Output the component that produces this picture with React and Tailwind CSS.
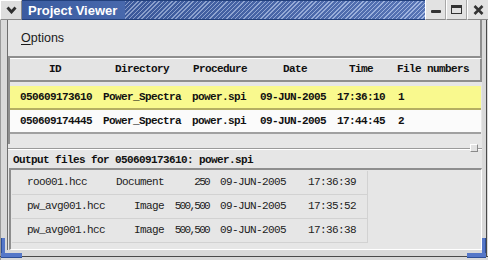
import React from "react";

const projects = [
  { id: "050609173610", dir: "Power_Spectra", proc: "power.spi", date: "09-JUN-2005", time: "17:36:10", n: "1", sel: true },
  { id: "050609174445", dir: "Power_Spectra", proc: "power.spi", date: "09-JUN-2005", time: "17:44:45", n: "2" },
];

const files = [
  ["roo001.hcc", "Document", "250", "09-JUN-2005", "17:36:39"],
  ["pw_avg001.hcc", "Image", "500,500", "09-JUN-2005", "17:35:52"],
  ["pw_avg001.hcc", "Image", "500,500", "09-JUN-2005", "17:36:38"],
];

const mono = "font-['Liberation_Mono',monospace] text-[11px] tracking-[-0.6px]";

const TitleButton = ({ children, last }) => (
  <div className={"w-[21px] h-full flex items-center justify-center bg-[#e2e2e2] border-l border-l-white border-b border-b-[#8a8a8a] " + (last ? "" : "border-r border-r-[#a8a8a8]")}>
    {children}
  </div>
);

const App = () => {
  return (
    <div className="w-[488px] h-[260px] flex flex-col bg-[#d9d9d9] relative overflow-hidden font-['Liberation_Sans',Arial,sans-serif]">
      {/* title bar */}
      <div className="h-[20px] flex shrink-0">
        <div className="w-[22px] h-full flex items-center justify-center bg-[#dedede] border-t border-l border-white border-r border-r-[#8a8a8a] border-b border-b-[#8a8a8a]">
          <svg width="11" height="8" viewBox="0 0 11 8">
            <path d="M1.5 1.5 L5.5 6 L9.5 1.5" stroke="#2f2f2f" strokeWidth="2.8" fill="none" />
          </svg>
        </div>
        <div className="flex-1 flex items-center bg-gradient-to-r from-[#3b5ca0] to-[#6d8dd0] border-t border-b border-[#22407c]">
          <span className="pl-[6px] pr-[8px] text-white font-bold text-[13px] leading-none">Project Viewer</span>
          <div className="flex-1 h-full bg-[repeating-linear-gradient(135deg,rgba(255,255,255,0.35)_0px,rgba(255,255,255,0.35)_1px,rgba(20,40,100,0.25)_1px,rgba(20,40,100,0.25)_3px)]" />
        </div>
        <div className="flex h-full">
          <TitleButton>
            <div className="w-[10px] h-[3px] mt-[4px] bg-[#333] rounded-[1px]" />
          </TitleButton>
          <TitleButton>
            <div className="w-[11px] h-[9px] border-[1.5px] border-t-[3px] border-[#333]" />
          </TitleButton>
          <TitleButton last>
            <svg width="11" height="10" viewBox="0 0 11 10">
              <path d="M1.5 1 L9.5 9 M9.5 1 L1.5 9" stroke="#333" strokeWidth="2.6" />
            </svg>
          </TitleButton>
        </div>
      </div>

      {/* window body */}
      <div className="flex-1 flex pl-[6px] pr-[7px] pb-[10px] border-l border-[#9a9a9a]">
        <div className="flex-1 flex flex-col bg-[#e6e6e6] border-l border-[#6e6e6e]">
          {/* menubar */}
          <div className="h-[38px] shrink-0 flex items-center pl-[13px] border-b-2 border-[#8e8e8e] border-r-2 border-r-[#8e8e8e]">
            <span className="text-[12.5px] text-[#1a1a1a]">
              <span className="underline underline-offset-2">O</span>ptions
            </span>
          </div>

          {/* top table */}
          <div className={"h-[86px] shrink-0 flex flex-col border-l-2 border-[#8e8e8e] " + mono}>
            <div className="h-[24px] flex items-center font-bold text-[#111] border-t border-white border-b-2 border-b-[#8e8e8e] border-r-2 border-r-[#8e8e8e] bg-[#e4e4e4]">
              <div className="w-[89px] pl-[39px]">ID</div>
              <div className="w-[90px] pl-[16px]">Directory</div>
              <div className="w-[67px] pl-[4px]">Procedure</div>
              <div className="w-[77px] pl-[27px]">Date</div>
              <div className="w-[60px] pl-[16px]">Time</div>
              <div className="w-[87px] pl-[4px]">File numbers</div>
            </div>
            <div className="h-[4px]" />
            {projects.map((p) => (
              <div
                key={p.id}
                className={
                  "h-[24px] flex items-center font-bold text-[#111] mr-[1px] border-b-2 " +
                  (p.sel ? "bg-[#f9f98e] border-[#b5ae62]" : "bg-[#fbfbfb] border-[#a0a0a0]")
                }
              >
                <div className="w-[87px] pl-[10px]">{p.id}</div>
                <div className="w-[90px] pl-[6px]">{p.dir}</div>
                <div className="w-[67px] pl-[5px]">{p.proc}</div>
                <div className="w-[77px] pl-[6px]">{p.date}</div>
                <div className="w-[60px] pl-[6px]">{p.time}</div>
                <div className="w-[87px] pl-[7px]">{p.n}</div>
              </div>
            ))}
            <div className="flex-1" />
          </div>

          {/* splitter */}
          <div className="h-[9px] shrink-0 relative flex items-center">
            <div className="w-full border-t border-[#9a9a9a] border-b border-b-white" />
            <div className="absolute right-[4px] top-[0px] w-[8px] h-[8px] bg-[#e2e2e2] border border-[#8a8a8a] border-t-white border-l-white" />
          </div>

          {/* output label */}
          <div className={"h-[15px] shrink-0 flex items-center pl-[5px] font-bold text-[#111] " + mono}>
            Output files for 050609173610: power.spi
          </div>

          {/* output table */}
          <div className="flex-1 flex flex-col ml-[1px] border-t-2 border-l-2 border-[#8e8e8e] border-r border-r-white border-b border-b-white pt-[1px] pl-[1px]">
            <div className={"w-[356px] flex flex-col text-[#222] " + mono}>
              {files.map((f, i) => (
                <div key={i} className="h-[24px] flex items-center border-b border-[#d2d2d2] border-r border-r-[#d2d2d2]">
                  <div className="w-[95px] pl-[15px] shrink-0">{f[0]}</div>
                  <div className="w-[63px] text-right pr-[6px] shrink-0">{f[1]}</div>
                  <div className="w-[44px] text-right pr-[5px] shrink-0 tracking-[-1.7px] whitespace-nowrap">{f[2]}</div>
                  <div className="w-[88px] pl-[6px] shrink-0">{f[3]}</div>
                  <div className="w-[66px] pl-[6px] shrink-0">{f[4]}</div>
                </div>
              ))}
            </div>
          </div>
        </div>
      </div>
      <div className="absolute left-0 right-0 bottom-[3px] h-[1px] bg-[#4a4a4a]" />
      <div className="absolute top-[20px] bottom-[3px] right-[1px] w-[1px] bg-[#4a4a4a]" />

      {/* resize corners */}
      <div className="absolute left-[1px] bottom-[2px] w-[4px] h-[20px] bg-[#5577c8] border-l border-[#2e4f98]" />
      <div className="absolute left-[1px] bottom-[2px] w-[21px] h-[5px] bg-[#5577c8] border-b border-[#2e4f98]" />
      <div className="absolute right-[2px] bottom-[2px] w-[4px] h-[20px] bg-[#5577c8] border-r border-[#2e4f98]" />
      <div className="absolute right-[2px] bottom-[2px] w-[19px] h-[5px] bg-[#5577c8] border-b border-[#2e4f98]" />
    </div>
  );
};

export default App;
